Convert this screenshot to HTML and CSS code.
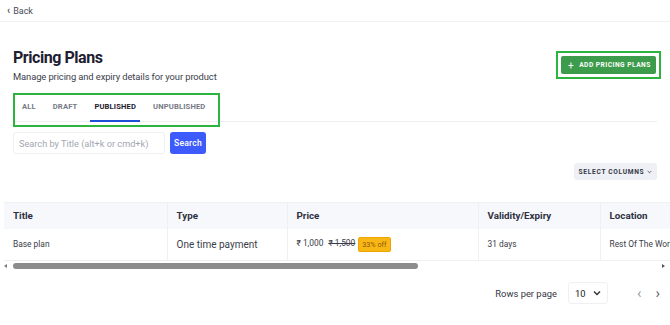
FILE: index.html
```html
<!DOCTYPE html>
<html>
<head>
<meta charset="utf-8">
<link rel="stylesheet" href="styles.css">
</head>
<body>
<header class="topbar">
  <a class="back" href="#"><span class="back-chev">‹</span>Back</a>
</header>
<main class="page">
  <div class="head">
    <div class="head-text">
      <h1 class="title">Pricing Plans</h1>
      <p class="subtitle">Manage pricing and expiry details for your product</p>
    </div>
    <div class="add-wrap">
      <button class="add-btn"><span class="plus">+</span>ADD PRICING PLANS</button>
    </div>
  </div>

  <div class="tabbar">
    <div class="tabs">
      <span class="tab">ALL</span>
      <span class="tab">DRAFT</span>
      <span class="tab active">PUBLISHED</span>
      <span class="tab">UNPUBLISHED</span>
    </div>
  </div>

  <div class="search">
    <input class="search-input" type="text" placeholder="Search by Title (alt+k or cmd+k)">
    <button class="search-btn">Search</button>
  </div>

  <div class="tools">
    <button class="cols-btn">SELECT COLUMNS
      <svg class="caret" width="5" height="4" viewBox="0 0 5 4"><path d="M0.7 1 L2.5 2.8 L4.3 1" fill="none" stroke="#555" stroke-width="0.9"/></svg>
    </button>
  </div>

  <div class="table-wrap">
    <table class="grid">
      <colgroup>
        <col class="c1"><col class="c2"><col class="c3"><col class="c4"><col class="c5">
      </colgroup>
      <thead>
        <tr><th>Title</th><th>Type</th><th>Price</th><th>Validity/Expiry</th><th>Location</th></tr>
      </thead>
      <tbody>
        <tr>
          <td class="small">Base plan</td>
          <td class="big">One time payment</td>
          <td class="small"><span class="price">₹ 1,000</span><s class="old">₹ 1,500</s><span class="badge">33% off</span></td>
          <td class="small">31 days</td>
          <td class="small">Rest Of The World</td>
        </tr>
      </tbody>
    </table>
  </div>

  <div class="hscroll">
    <span class="arrow-l"></span>
    <span class="thumb"></span>
    <span class="spacer"></span>
    <span class="arrow-r"></span>
  </div>

  <div class="pager">
    <span class="rpp">Rows per page</span>
    <div class="rpp-select"><span>10</span>
      <svg width="8" height="6" viewBox="0 0 8 6"><path d="M1 1.5 L4 4.5 L7 1.5" fill="none" stroke="#333" stroke-width="1.4"/></svg>
    </div>
    <span class="nav prev">‹</span>
    <span class="nav next">›</span>
  </div>
</main>
</body>
</html>
```

FILE: styles.css
```css
* { box-sizing: border-box; }
html, body { margin: 0; padding: 0; background: #fff; }
body {
  font-family: Roboto, "Noto Sans", sans-serif;
  color: #2a2d3a;
  width: 670px;
  overflow: hidden;
}

.topbar {
  height: 22px;
  border-bottom: 1px solid #f1f2f5;
  padding: 5px 0 0 7px;
}
.back {
  display: flex;
  align-items: center;
  gap: 3px;
  height: 12px;
  font-size: 9px;
  line-height: 12px;
  color: #474a55;
  text-decoration: none;
}
.back-chev { font-size: 10px; font-weight: 700; line-height: 12px; }

.page { padding: 0 13px; }

.head {
  display: flex;
  justify-content: space-between;
  align-items: flex-start;
  padding-top: 26px;
}
.title {
  margin: 0;
  font-size: 16px;
  line-height: 20px;
  font-weight: 700;
  color: #1d2030;
  letter-spacing: -0.45px;
}
.subtitle {
  margin: 3px 0 0;
  font-size: 9.4px;
  line-height: 12px;
  color: #3b3e4b;
  letter-spacing: -0.1px;
}
.add-wrap {
  margin-top: 3px;
  margin-right: -4px;
  border: 2px solid #2cb43f;
  padding: 3px;
}
.add-btn {
  display: flex;
  align-items: center;
  height: 18px;
  width: 95px;
  padding: 0 0 0 7px;
  border: 0;
  border-radius: 2px;
  background: #3d9c4c;
  color: #fff;
  font-family: inherit;
  font-size: 6.6px;
  font-weight: 700;
  letter-spacing: 0.5px;
}
.plus { font-size: 10px; font-weight: 400; margin-right: 5px; }

.tabbar {
  margin-top: 12px;
  border-bottom: 1px solid #eceef2;
  display: flex;
}
.tabs {
  position: relative;
  display: flex;
  gap: 9px;
  padding: 0 11px 0 5px;
}
.tabs::after {
  content: "";
  position: absolute;
  top: -2px; left: 0; right: 0; bottom: -6px;
  border: 2px solid #2cb43f;
  pointer-events: none;
}
.tab {
  padding: 7px 4px 8px;
  font-size: 7.6px;
  line-height: 10px;
  font-weight: 700;
  letter-spacing: 0.15px;
  color: #767985;
  border-bottom: 2px solid transparent;
  margin-bottom: -1px;
}
.tab.active {
  color: #1d2030;
  border-bottom-color: #1f4fd6;
}

.search {
  display: flex;
  gap: 5px;
  margin-top: 10px;
}
.search-input {
  width: 152px;
  height: 22px;
  border: 1px solid #eef0f3;
  border-radius: 3px;
  padding: 0 5px;
  font-family: inherit;
  font-size: 9.2px;
  color: #333;
  outline: none;
}
.search-input::placeholder { color: #a3a7b1; }
.search-btn {
  width: 36px;
  height: 22px;
  border: 0;
  border-radius: 3px;
  background: #3d5bfd;
  color: #fff;
  font-family: inherit;
  font-size: 8.6px;
  font-weight: 500;
  letter-spacing: 0.2px;
  padding: 0;
}

.tools {
  display: flex;
  justify-content: flex-end;
  margin-top: 9px;
}
.cols-btn {
  display: flex;
  align-items: center;
  justify-content: center;
  gap: 3px;
  width: 83px;
  height: 17px;
  border: 0;
  border-radius: 3px;
  background: #eef0f5;
  color: #353846;
  font-family: inherit;
  font-size: 6.6px;
  font-weight: 700;
  letter-spacing: 0.7px;
  padding: 0;
}
.caret { display: block; }

.table-wrap {
  margin: 22px -13px 0 -9px;
  overflow: hidden;
}
.grid {
  border-collapse: collapse;
  table-layout: fixed;
  width: 746px;
}
.c1 { width: 163px; }
.c2 { width: 120px; }
.c3 { width: 191px; }
.c4 { width: 122px; }
.c5 { width: 150px; }
.grid th, .grid td {
  text-align: left;
  padding: 0 9px;
  border-left: 1px solid #eef0f4;
  white-space: nowrap;
}
.grid th:first-child, .grid td:first-child { border-left: 0; }
.grid th {
  height: 26px;
  background: #f7f8fb;
  border-top: 1px solid #f0f1f5;
  font-size: 9.8px;
  font-weight: 700;
  color: #2e3142;
}
.grid td {
  height: 32px;
  border-bottom: 1px solid #eef0f4;
  color: #3a3d49;
}
.small { font-size: 8.4px; }
.big { font-size: 10px; }
.price { margin-right: 5px; }
.old { margin-right: 3px; color: #3a3d49; }
.badge {
  display: inline-block;
  padding: 0 3px;
  height: 15px;
  line-height: 13px;
  border: 1px solid #eea500;
  border-radius: 2px;
  background: #f8b714;
  color: #94580a;
  font-size: 7.2px;
  vertical-align: middle;
}

.hscroll {
  display: flex;
  align-items: center;
  height: 10px;
  margin: 0 -13px;
  padding: 0 5px 0 4px;
}
.arrow-l {
  width: 0; height: 0;
  border-top: 2.5px solid transparent;
  border-bottom: 2.5px solid transparent;
  border-right: 3px solid #7a7a7a;
}
.thumb {
  width: 405px;
  height: 6px;
  margin-left: 6px;
  border-radius: 3px;
  background: #8c8c8c;
}
.spacer { flex: 1; }
.arrow-r {
  width: 0; height: 0;
  border-top: 2.5px solid transparent;
  border-bottom: 2.5px solid transparent;
  border-left: 3px solid #555;
}

.pager {
  display: flex;
  justify-content: flex-end;
  align-items: center;
  margin-top: 11px;
  margin-right: -3px;
}
.rpp {
  font-size: 9.4px;
  color: #333644;
}
.rpp-select {
  display: flex;
  align-items: center;
  justify-content: space-between;
  width: 40px;
  height: 22px;
  margin-left: 11px;
  padding: 0 6px 0 6px;
  border: 1px solid #eef0f3;
  border-radius: 3px;
  font-size: 9.4px;
  color: #222;
}
.nav {
  font-size: 15px;
  line-height: 15px;
  color: #9a9ca4;
}
.prev { margin-left: 29px; }
.next { margin-left: 14px; color: #5e616c; }
```
